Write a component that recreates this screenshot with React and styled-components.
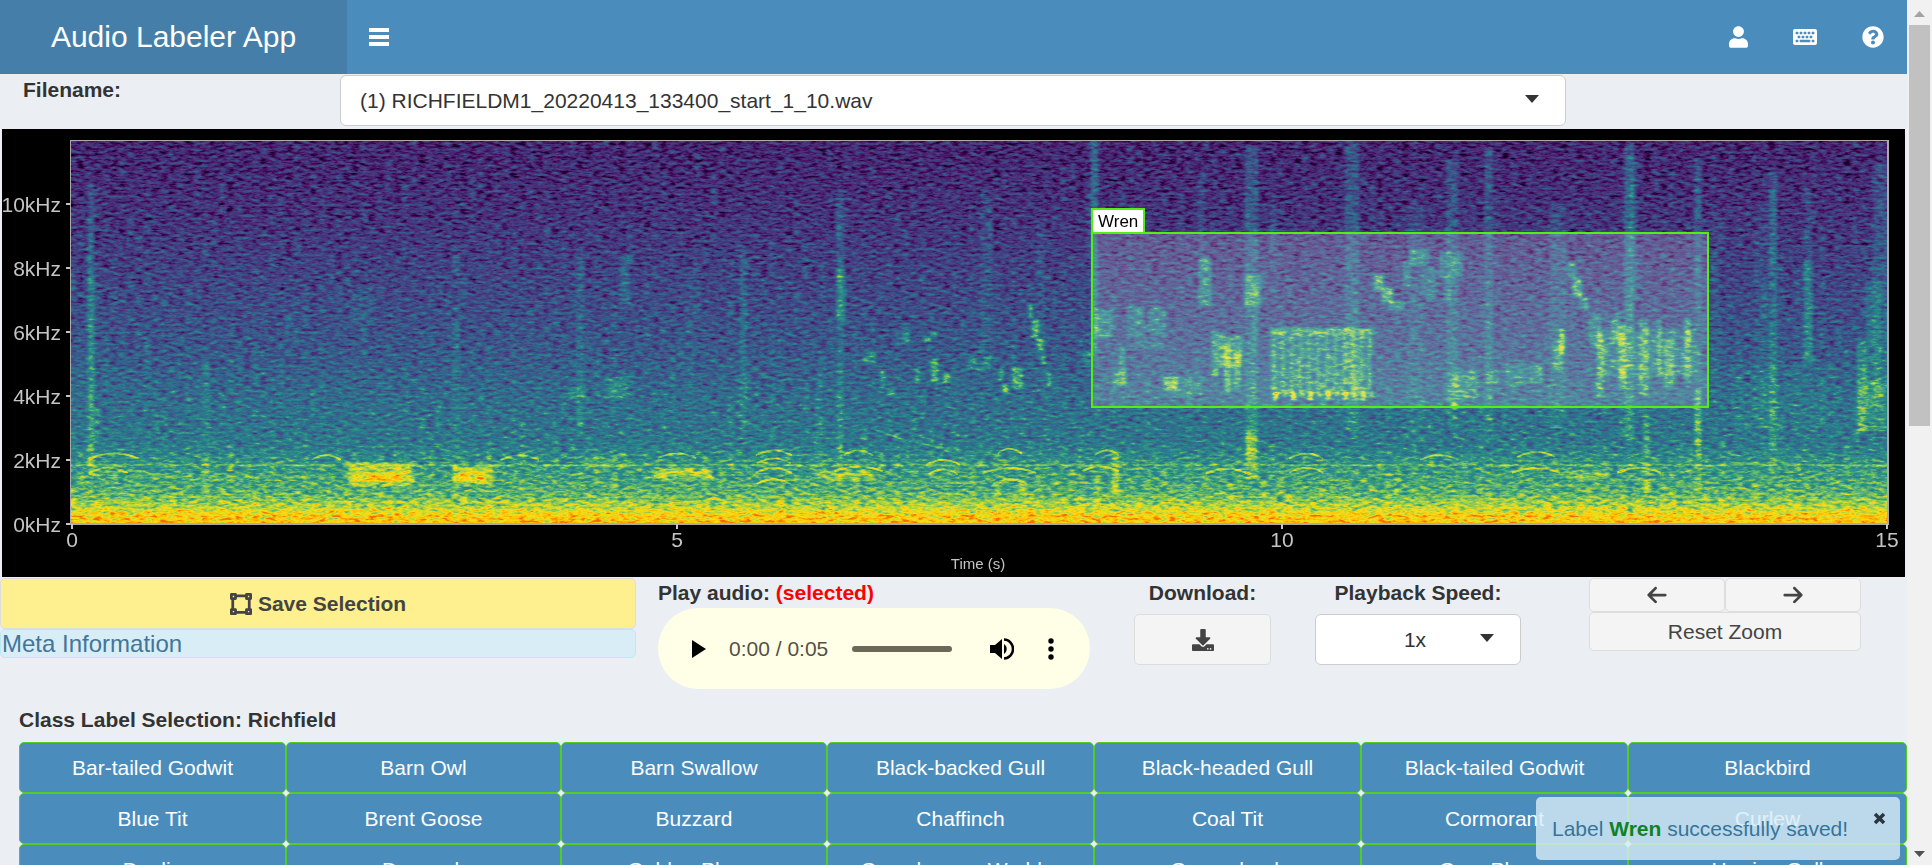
import React from 'react'
import styled, { createGlobalStyle } from 'styled-components'
import { FaUser, FaKeyboard, FaQuestionCircle, FaVectorSquare, FaDownload } from 'react-icons/fa'
import { FaArrowLeft, FaArrowRight } from 'react-icons/fa6'

const GlobalStyle = createGlobalStyle`
  * {
    box-sizing: border-box;
  }

  body {
    margin: 0;
    background: #ebeff4;
    color: #333;
    font-family: 'Liberation Sans', Arial, sans-serif;
    font-size: 21px;
    line-height: 30px;
    overflow: hidden;
  }

  button, select, input {
    font: inherit;
    color: inherit;
    margin: 0;
  }
`

const Window = styled.div`
  display: flex;
  height: 100vh;
  overflow: hidden;
`

const Page = styled.div`
  flex: 1;
  min-width: 0;
  overflow: hidden;
`

const Header = styled.header`
  display: flex;
  height: 74px;
  background: #4a8dbd;
  color: white;
`

const Logo = styled.a`
  display: flex;
  align-items: center;
  justify-content: center;
  width: 347px;
  background: #457fa9;
  color: white;
  font-size: 30px;
  text-decoration: none;
`

const MenuButton = styled.button`
  display: flex;
  align-items: center;
  padding: 0 22px;
  border: none;
  background: none;
`

const Nav = styled.nav`
  display: flex;
  margin-left: auto;
`

const NavLink = styled.a`
  display: flex;
  align-items: center;
  padding: 0 23px 0 22px;
  color: white;

  svg {
    width: ${props => props.$iconWidth}px;
    height: 22px;
  }
`

const FileRow = styled.div`
  display: grid;
  grid-template-columns: 317fr 1226fr 341fr;
  padding: 1px 0 3px 23px;
`

const Label = styled.label`
  font-weight: bold;
`

const SelectBox = styled.div`
  position: relative;
  color: #333;

  svg {
    position: absolute;
    top: 20px;
    right: 27px;
    pointer-events: none;
  }
`

const Select = styled.select`
  display: block;
  width: 100%;
  height: 51px;
  padding: ${props => props.$centered ? '0 22px 0 16px' : '0 19px'};
  appearance: none;
  border: 1px solid #ccc;
  border-radius: 6px;
  background: white;
  text-align-last: ${props => props.$centered ? 'center' : 'left'};
`

const Chart = styled.svg`
  display: block;
  width: calc(100% - 4px);
  margin: 0 2px 1px;
  background: black;
  font-family: 'Liberation Sans', Arial, sans-serif;
`

const Controls = styled.div`
  display: grid;
  grid-template-columns: 636fr 476fr 181fr 250fr 364fr;
  margin-bottom: 16px;
`

const ControlCell = styled.div`
  padding: 0 22px;
  text-align: ${props => props.$centered ? 'center' : 'left'};

  > ${Label} {
    display: block;
  }
`

const Red = styled.span`
  color: red;
`

const SaveButton = styled.button`
  display: flex;
  align-items: center;
  justify-content: center;
  gap: 6px;
  width: 100%;
  height: 51px;
  border: 1px solid #ddd;
  border-radius: 5px;
  background: #fef08e;
  color: #444;
  font-weight: bold;
`

const MetaPanel = styled.div`
  height: 29px;
  padding-left: 1px;
  border: 1px solid #bce8f1;
  border-radius: 5px;
  background: #d9edf7;
  color: #417698;
  font-size: 24px;
  line-height: 27px;
`

const Player = styled.div`
  display: flex;
  align-items: center;
  height: 81px;
  padding: 0 32px 0 33px;
  border-radius: 41px;
  background: #ffffe8;
  color: #555044;
`

const PlayerButton = styled.button`
  display: flex;
  padding: 0;
  border: none;
  background: none;
  color: black;
`

const PlayerTime = styled.span`
  margin: 0 24px 0 23px;
`

const Seek = styled.input`
  flex: 1;
  min-width: 0;
  height: 6px;
  margin: 0 38px 0 0;
  appearance: none;
  border-radius: 3px;
  background: #6b6857;

  &::-webkit-slider-thumb {
    appearance: none;
    width: 0;
    height: 0;
  }

  & + ${PlayerButton} {
    margin-right: 30px;
  }
`

const ActionButton = styled.button`
  display: flex;
  align-items: center;
  justify-content: center;
  width: 100%;
  height: ${props => props.$height}px;
  padding: 0;
  border: 1px solid #ddd;
  border-radius: 5px;
  background: #f4f4f4;
  color: #444;
`

const ButtonSlot = styled.div`
  padding-top: 6px;
`

const ZoomControls = styled.div`
  display: grid;
  grid-template-columns: 1fr 1fr;
  align-content: start;
  padding: 0 46px;

  ${ActionButton}:last-child {
    grid-column: span 2;
  }
`

const ClassSection = styled.section`
  padding-left: 19px;
`

const Heading = styled.h4`
  margin: 0 0 7px;
  font-size: 21px;
  line-height: 30px;
`

const ClassGrid = styled.div`
  display: grid;
  grid-template-columns: 267fr 275fr 266fr 267fr 267fr 267fr 279fr;
`

const ClassButton = styled.button`
  height: 51px;
  padding: 0;
  border: 1px solid #55cc22;
  border-radius: 5px;
  background: #4a8dbd;
  color: white;
`

const Toast = styled.div`
  position: fixed;
  right: 32px;
  bottom: 5px;
  display: flex;
  align-items: flex-start;
  width: 364px;
  height: 63px;
  padding: 17px 12px 0 16px;
  border-radius: 5px;
  background: #d9edf7;
  color: #31708f;
  opacity: 0.8;
`

const ToastText = styled.span`
  flex: 1;
  white-space: nowrap;

  b {
    color: green;
  }
`

const CloseButton = styled.button`
  position: absolute;
  top: 13px;
  right: 12px;
  display: flex;
  padding: 2px;
  border: none;
  background: none;
  color: #222;
`

const Scrollbar = styled.div`
  display: flex;
  flex-direction: column;
  align-items: center;
  width: 25px;
  padding: 11px 2px 8px;
  background: #f1f1f1;

  svg {
    flex: none;
  }
`

const ScrollTrack = styled.div`
  flex: 1;
  width: 100%;
  margin: 8px 0;
`

const ScrollThumb = styled.div`
  height: 49%;
  background: #c1c1c1;
`

// plot geometry, in chart units
const LEFT = 69
const RIGHT = 1886
const TOP = 12
const BOTTOM = 395
const xOf = seconds => 70 + seconds * 121
const yOf = khz => BOTTOM - khz * 32

// broadband clicks: time, width (s), low and high kHz, strength
const clicks = [
  [0.15, 0.04, 1.5, 7.8, 0.28], [0.15, 0.03, 7.8, 10.6, 0.18], [1.1, 0.05, 1, 5, 0.1],
  [1.8, 0.12, 5.6, 7.2, 0.04], [2.38, 0.15, 6.2, 7.4, 0.08], [3.17, 0.05, 2, 8.6, 0.08],
  [4.19, 0.05, 3, 8.5, 0.1], [4.56, 0.06, 6.8, 8.4, 0.16], [5.1, 0.06, 4, 8, 0.06],
  [5.54, 0.04, 2.8, 8.6, 0.14], [6.16, 0.04, 2, 4.8, 0.1], [6.35, 0.06, 6.3, 8, 0.2],
  [6.34, 0.04, 1.8, 10.4, 0.16], [7.55, 0.08, 5, 10.5, 0.08], [8.0, 0.05, 4, 9.5, 0.08],
  [8.44, 0.04, 5.2, 12, 0.25], [8.62, 0.04, 0.9, 2.2, 0.3], [9.33, 0.04, 8, 11, 0.1],
  [9.74, 0.09, 6, 11.8, 0.16], [9.74, 0.08, 1.4, 6, 0.2], [9.74, 0.08, 2, 2.9, 0.3],
  [9.92, 0.04, 7, 10, 0.1], [10.57, 0.1, 2.9, 12, 0.16], [11.1, 0.12, 2.6, 10, 0.08],
  [11.4, 0.08, 3, 11.4, 0.15], [11.7, 0.05, 2.6, 11.8, 0.17], [12.27, 0.12, 3, 10, 0.1],
  [12.86, 0.06, 2.6, 11.8, 0.22], [12.9, 0.04, 7, 11.5, 0.12], [13, 0.04, 1, 3.6, 0.16],
  [13.43, 0.04, 1, 11.4, 0.18], [13.43, 0.04, 2, 4.2, 0.2], [13.58, 0.06, 4, 9.8, 0.06],
  [13.95, 0.1, 3, 10, 0.06], [14.05, 0.05, 1.8, 11, 0.2], [14.34, 0.06, 5, 8.2, 0.26],
  [14.34, 0.04, 8.2, 10.5, 0.1], [14.78, 0.06, 2.8, 5.8, 0.24], [14.88, 0.12, 3.6, 7.6, 0.15],
  [14.94, 0.12, 4, 11.3, 0.12], [7.85, 0.04, 0.5, 1.3, 0.25]
]

// single notes: start, end (s), low and high kHz, strength
const notes = [
  [8.45, 8.6, 5.8, 6.7, 0.28], [8.72, 8.86, 5.8, 6.8, 0.2], [8.9, 9.04, 5.9, 6.8, 0.2],
  [8.78, 9.02, 5.5, 5.7, 0.2], [8.6, 8.72, 4.3, 4.8, 0.34], [8.65, 8.7, 4.8, 5.6, 0.26],
  [9.02, 9.14, 4.15, 4.6, 0.46], [9.12, 9.35, 4.0, 4.6, 0.18], [9.31, 9.42, 6.8, 8.3, 0.28],
  [9.69, 9.83, 6.8, 7.8, 0.32], [9.42, 9.48, 4.6, 6.0, 0.36], [9.48, 9.68, 4.9, 5.9, 0.3],
  [9.52, 9.58, 4.1, 5.6, 0.4], [9.6, 9.66, 4.2, 5.4, 0.36], [10.76, 10.84, 7.3, 7.8, 0.46],
  [10.82, 10.92, 6.9, 7.4, 0.42], [10.88, 11.02, 6.7, 6.95, 0.34], [11.0, 11.06, 7.4, 8.2, 0.25],
  [11.05, 11.22, 8.1, 8.6, 0.26], [11.15, 11.28, 7, 8, 0.18], [11.3, 11.5, 7.7, 8.5, 0.24],
  [11.34, 11.4, 6.8, 7.7, 0.2], [11.4, 11.46, 3.6, 4.8, 0.32], [11.46, 11.62, 3.9, 4.8, 0.26],
  [11.7, 11.8, 4.4, 4.8, 0.22], [11.85, 12.02, 4.3, 5.0, 0.2], [12.04, 12.16, 4.4, 5.0, 0.22],
  [12.24, 12.32, 4.8, 5.7, 0.3], [12.29, 12.34, 5.3, 6.1, 0.46], [12.36, 12.43, 7.7, 8.2, 0.36],
  [12.4, 12.48, 7.1, 7.7, 0.44], [12.45, 12.53, 6.7, 7.1, 0.36], [12.54, 12.64, 5.5, 6.6, 0.24],
  [12.6, 12.66, 4.0, 6.0, 0.32], [12.72, 12.79, 5.6, 6.6, 0.32], [12.78, 12.84, 4.2, 6.2, 0.36],
  [12.95, 13.03, 4, 6.4, 0.3], [13.1, 13.14, 4.6, 6.4, 0.3], [13.16, 13.24, 4.2, 5.8, 0.28],
  [13.32, 13.38, 4.5, 6.4, 0.3], [12.6, 13.42, 4.6, 6.1, 0.18], [9.9, 10.74, 4, 6.15, 0.2],
  [9.9, 10.78, 5.9, 6.12, 0.26], [6.54, 6.64, 5.0, 5.4, 0.26], [6.68, 6.72, 4.3, 4.8, 0.34],
  [6.74, 6.8, 4.0, 4.25, 0.28], [6.86, 6.92, 5.6, 6.1, 0.34], [7.04, 7.1, 5.7, 5.85, 0.42],
  [7.09, 7.15, 5.85, 6.0, 0.42], [6.97, 7.01, 4.4, 4.9, 0.3], [7.1, 7.16, 4.4, 5.2, 0.36],
  [7.2, 7.26, 4.4, 4.7, 0.5], [7.4, 7.6, 4.8, 5.2, 0.18], [7.66, 7.7, 4.5, 4.9, 0.34],
  [7.69, 7.74, 4.1, 4.35, 0.52], [7.77, 7.86, 4.2, 4.9, 0.32], [7.9, 7.94, 6.4, 6.9, 0.36],
  [7.93, 7.99, 5.8, 6.4, 0.42], [7.97, 8.03, 5.4, 5.8, 0.4], [8.01, 8.05, 5, 5.3, 0.32],
  [8.06, 8.1, 4.3, 4.7, 0.34], [8.36, 8.42, 5, 5.4, 0.26], [4.1, 4.25, 3.9, 4.3, 0.16],
  [4.4, 4.6, 3.9, 4.6, 0.18], [14.76, 15, 2.9, 4.5, 0.18], [13.7, 14.6, 3, 5, 0.06],
  [2.28, 2.82, 1.2, 1.9, 0.38], [2.38, 2.78, 1.35, 1.6, 0.5], [3.15, 3.48, 1.25, 1.8, 0.4],
  [3.2, 3.42, 1.35, 1.6, 0.45], [4.8, 5.3, 1.4, 1.75, 0.28], [6.16, 6.62, 1.35, 1.7, 0.26],
  [4.2, 4.6, 1.7, 2.2, 0.12], [12.35, 12.7, 1.4, 1.7, 0.2], [0.05, 2, 1.45, 1.5, 0.26]
]

// falling and rising whistles: time, top kHz, half width (s)
const whistles = [
  [0.35, 2.2, 0.2], [0.3, 1.75, 0.16], [2.1, 2.15, 0.12], [3.7, 2.15, 0.16], [5, 2.2, 0.16],
  [5.05, 1.65, 0.24], [5.8, 2.3, 0.15], [5.8, 2.05, 0.14], [5.8, 1.75, 0.15], [5.8, 1.4, 0.14],
  [6.5, 2.3, 0.12], [6.5, 1.8, 0.2], [7.2, 2.0, 0.14], [7.2, 1.7, 0.12], [7.75, 2.35, 0.1],
  [7.75, 1.75, 0.22], [7.75, 1.4, 0.14], [8.55, 2.3, 0.1], [8.5, 1.8, 0.15], [9.55, 1.72, 0.18],
  [10.2, 2.2, 0.14], [10.2, 1.75, 0.14], [11.3, 2.15, 0.16], [12.1, 2.25, 0.16],
  [12.1, 1.75, 0.2], [12.95, 1.75, 0.18]
]

const trill = [0, 1, 2, 3, 4, 5, 6, 7, 8, 9, 10, 11]

const Spectrogram = () => (
  <Chart viewBox="0 0 1903 448" role="img" aria-label="Spectrogram">
    <defs>
      <linearGradient id="level" x1="0" y1="0" x2="0" y2="1">
        <stop offset="0" stopColor="#292929" />
        <stop offset="0.2" stopColor="#343434" />
        <stop offset="0.4" stopColor="#454545" />
        <stop offset="0.55" stopColor="#525252" />
        <stop offset="0.68" stopColor="#646464" />
        <stop offset="0.79" stopColor="#6e6e6e" />
        <stop offset="0.84" stopColor="#868686" />
        <stop offset="0.92" stopColor="#9c9c9c" />
        <stop offset="0.955" stopColor="#bcbcbc" />
        <stop offset="0.98" stopColor="#dcdcdc" />
        <stop offset="1" stopColor="#e0e0e0" />
      </linearGradient>
      <filter id="soften" x="-5%" y="-5%" width="110%" height="110%">
        <feGaussianBlur stdDeviation="1.5 1" />
      </filter>
      <filter id="colormap" x="0" y="0" width="1" height="1" colorInterpolationFilters="sRGB">
        <feTurbulence type="fractalNoise" baseFrequency="0.12 0.36" numOctaves="3" seed="8" />
        <feColorMatrix values="0.5 0.5 0 0 0  0.5 0.5 0 0 0  0.5 0.5 0 0 0  0 0 0 0 1" result="noise" />
        <feComposite in="SourceGraphic" in2="noise" operator="arithmetic" k2="1" k3="0.76" k4="-0.38" />
        <feComponentTransfer>
          <feFuncR type="table" tableValues="0.05 0.26 0.28 0.25 0.21 0.16 0.2 0.42 0.7 0.96 1 0.95" />
          <feFuncG type="table" tableValues="0 0.03 0.18 0.29 0.4 0.5 0.6 0.74 0.83 0.88 0.72 0.42" />
          <feFuncB type="table" tableValues="0.12 0.34 0.47 0.53 0.55 0.55 0.52 0.4 0.24 0.1 0 0" />
        </feComponentTransfer>
      </filter>
      <clipPath id="plot">
        <rect x={LEFT} y={TOP} width={RIGHT - LEFT} height={BOTTOM - TOP} />
      </clipPath>
    </defs>

    <g filter="url(#colormap)" clipPath="url(#plot)">
      <rect x={LEFT} y={TOP} width={RIGHT - LEFT} height={BOTTOM - TOP} fill="url(#level)" />
      <g filter="url(#soften)" fill="white">
        {clicks.map(([t, w, low, high, strength], i) => (
          <rect key={i} x={xOf(t - w / 2)} y={yOf(high)} width={w * 121 + 2} height={(high - low) * 32} opacity={strength} />
        ))}
        {notes.map(([from, to, low, high, strength], i) => (
          <rect key={i} x={xOf(from)} y={yOf(high)} width={(to - from) * 121} height={(high - low) * 32} opacity={strength} />
        ))}
        {trill.map(i => (
          <g key={i}>
            <rect x={xOf(9.92 + i * 0.072)} y={yOf(6)} width="4" height="62" opacity="0.2" />
            <rect x={xOf(9.93 + i * 0.072)} y={yOf(4.15)} width="5" height={i % 2 ? 6 : 9} opacity={i % 2 ? 0.35 : 0.7} />
          </g>
        ))}
      </g>
      <g fill="none" stroke="white" strokeWidth="2" opacity="0.4">
        {whistles.map(([t, khz, w], i) => (
          <path key={i} d={`M${xOf(t - w)} ${yOf(khz - 0.15)}Q${xOf(t)} ${yOf(khz + 0.15)} ${xOf(t + w)} ${yOf(khz - 0.15)}`} />
        ))}
        <path d={`M${xOf(6.6)} ${yOf(3)}Q${xOf(7)} ${yOf(2.4)} ${xOf(7.4)} ${yOf(2.3)}`} opacity="0.6" />
      </g>
      <rect x={LEFT} y={yOf(1.87)} width={RIGHT - LEFT} height="2" fill="white" opacity="0.2" />
    </g>

    <g fill="#aaa">
      <rect x={LEFT - 1} y={TOP - 1} width={RIGHT - LEFT + 2} height="1" />
      <rect x={LEFT - 1} y={TOP} width="1" height={BOTTOM - TOP} />
      <rect x={RIGHT - 1} y={TOP} width="2" height={BOTTOM - TOP} />
      <rect x={LEFT - 1} y={BOTTOM - 1} width={RIGHT - LEFT + 2} height="2" />
    </g>
    <g fill="#c4c4c4" fontSize="21">
      {[0, 2, 4, 6, 8, 10].map(khz => (
        <g key={khz}>
          <rect x={LEFT - 5} y={yOf(khz) - 1} width="4" height="2" />
          <text x="59" y={yOf(khz) + 8} textAnchor="end">{khz}kHz</text>
        </g>
      ))}
      {[0, 5, 10, 15].map(seconds => (
        <g key={seconds}>
          <rect x={xOf(seconds) - 1} y={BOTTOM} width="2" height="5" />
          <text x={xOf(seconds)} y="418" textAnchor="middle">{seconds}</text>
        </g>
      ))}
      <text x="976" y="440" fontSize="15" textAnchor="middle">Time (s)</text>
    </g>

    <g stroke="#52ee14" strokeWidth="2">
      <rect x="1090" y="104" width="616" height="174" fill="white" fillOpacity="0.17" />
      <rect x="1090" y="80" width="52" height="24" fill="white" />
    </g>
    <text x="1096" y="98" fontSize="17" fill="black">Wren</text>
  </Chart>
)

const Caret = () => (
  <svg width="14" height="8" viewBox="0 0 14 8" aria-hidden="true">
    <path d="M0 0h14L7 8z" fill="currentColor" />
  </svg>
)

const species = [
  'Bar-tailed Godwit', 'Barn Owl', 'Barn Swallow', 'Black-backed Gull', 'Black-headed Gull', 'Black-tailed Godwit', 'Blackbird',
  'Blue Tit', 'Brent Goose', 'Buzzard', 'Chaffinch', 'Coal Tit', 'Cormorant', 'Curlew',
  'Dunlin', 'Dunnock', 'Golden Plover', 'Grasshopper Warbler', 'Greenshank', 'Grey Plover', 'Herring Gull'
]

const App = () => {
  return (
    <>
      <GlobalStyle />
      <Window>
        <Page>
          <Header>
            <Logo href="#">Audio Labeler App</Logo>
            <MenuButton aria-label="Toggle navigation">
              <svg width="20" height="18" viewBox="0 0 20 18">
                <path d="M0 0h20v4H0zM0 7h20v4H0zM0 14h20v4H0z" fill="white" />
              </svg>
            </MenuButton>
            <Nav>
              <NavLink href="#" $iconWidth={19} aria-label="User"><FaUser /></NavLink>
              <NavLink href="#" $iconWidth={24} aria-label="Keyboard shortcuts"><FaKeyboard /></NavLink>
              <NavLink href="#" $iconWidth={22} aria-label="Help"><FaQuestionCircle /></NavLink>
            </Nav>
          </Header>

          <FileRow>
            <Label htmlFor="file">Filename:</Label>
            <SelectBox>
              <Select id="file">
                <option>(1) RICHFIELDM1_20220413_133400_start_1_10.wav</option>
              </Select>
              <Caret />
            </SelectBox>
          </FileRow>

          <Spectrogram />

          <Controls>
            <div>
              <SaveButton><FaVectorSquare size={22} />Save Selection</SaveButton>
              <MetaPanel>Meta Information</MetaPanel>
            </div>
            <ControlCell>
              <Label htmlFor="seek">Play audio: <Red>(selected)</Red></Label>
              <Player>
                <PlayerButton aria-label="Play">
                  <svg width="15" height="18" viewBox="0 0 15 18"><path d="M1 0l14 9-14 9z" /></svg>
                </PlayerButton>
                <PlayerTime>0:00 / 0:05</PlayerTime>
                <Seek id="seek" type="range" defaultValue="0" />
                <PlayerButton aria-label="Mute">
                  <svg width="24" height="22" viewBox="0 0 24 22">
                    <path d="M0 7h5l7-6v20l-7-6H0z" />
                    <path d="M14 6a6 6 0 0 1 0 10z" />
                    <path d="M14 1.5a9 9.5 0 0 1 0 19" fill="none" stroke="black" strokeWidth="2.5" />
                  </svg>
                </PlayerButton>
                <PlayerButton aria-label="More options">
                  <svg width="14" height="22" viewBox="0 0 14 22">
                    <circle cx="7" cy="3" r="2.7" />
                    <circle cx="7" cy="11" r="2.7" />
                    <circle cx="7" cy="19" r="2.7" />
                  </svg>
                </PlayerButton>
              </Player>
            </ControlCell>
            <ControlCell $centered>
              <Label htmlFor="download">Download:</Label>
              <ButtonSlot>
                <ActionButton id="download" $height={51}><FaDownload size={22} /></ActionButton>
              </ButtonSlot>
            </ControlCell>
            <ControlCell $centered>
              <Label htmlFor="speed">Playback Speed:</Label>
              <ButtonSlot>
                <SelectBox>
                  <Select id="speed" $centered>
                    <option>1x</option>
                  </Select>
                  <Caret />
                </SelectBox>
              </ButtonSlot>
            </ControlCell>
            <ZoomControls>
              <ActionButton $height={34} aria-label="Previous file"><FaArrowLeft size={22} /></ActionButton>
              <ActionButton $height={34} aria-label="Next file"><FaArrowRight size={22} /></ActionButton>
              <ActionButton $height={39}>Reset Zoom</ActionButton>
            </ZoomControls>
          </Controls>

          <ClassSection>
            <Heading>Class Label Selection: Richfield</Heading>
            <ClassGrid>
              {species.map(name => <ClassButton key={name}>{name}</ClassButton>)}
            </ClassGrid>
          </ClassSection>
        </Page>

        <Scrollbar>
          <svg width="11" height="6" viewBox="0 0 11 6"><path d="M0 6h11L5.5 0z" fill="#a3a3a3" /></svg>
          <ScrollTrack>
            <ScrollThumb />
          </ScrollTrack>
          <svg width="11" height="6" viewBox="0 0 11 6"><path d="M0 0h11L5.5 6z" fill="#505050" /></svg>
        </Scrollbar>
      </Window>

      <Toast role="status">
        <ToastText>Label <b>Wren</b> successfully saved!</ToastText>
        <CloseButton aria-label="Close">
          <svg width="13" height="13" viewBox="0 0 13 13">
            <path d="M2 2l9 9M11 2l-9 9" stroke="currentColor" strokeWidth="3.5" />
          </svg>
        </CloseButton>
      </Toast>
    </>
  )
}

export default App
